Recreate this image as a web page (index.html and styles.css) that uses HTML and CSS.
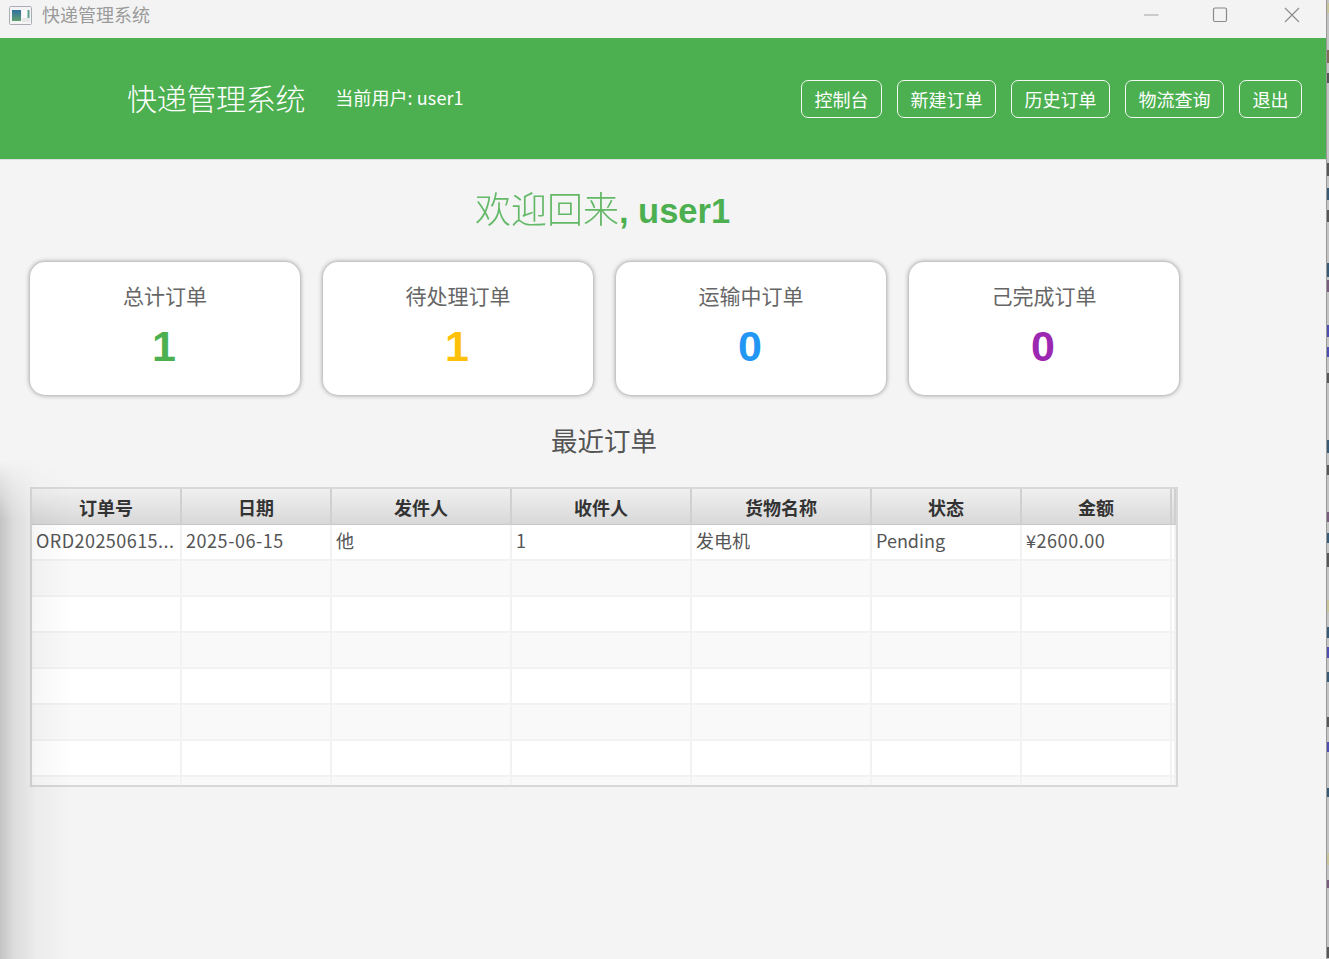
FILE: index.html
```html
<!DOCTYPE html>
<html lang="zh-CN">
<head>
<meta charset="utf-8">
<title>快递管理系统</title>
<link rel="stylesheet" href="styles.css">
</head>
<body>
<div class="desktop">
  <div class="window">
    <div class="titlebar">
      <svg class="app-icon" width="23" height="19" viewBox="0 0 23 19">
        <defs>
          <linearGradient id="panel" x1="0" y1="0" x2="0" y2="1"><stop offset="0" stop-color="#2f6f9f"/><stop offset="1" stop-color="#5f9f6f"/></linearGradient>
        </defs>
        <rect x="0.5" y="0.5" width="22" height="18" rx="1" fill="#f4f4f4" stroke="#a9adb3"/>
        <rect x="3" y="4" width="9" height="11" fill="url(#panel)"/>
        <rect x="13" y="4" width="6" height="8" fill="#fbfbfb"/>
        <rect x="18.5" y="4" width="2" height="8" fill="#5f9f90"/>
        <rect x="13" y="12" width="8" height="4" fill="#e8e8e8"/>
      </svg>
      <span class="window-title">快递管理系统</span>
      <div class="window-controls">
        <svg width="16" height="16" viewBox="0 0 16 16"><path d="M1 8H15.5" stroke="#a0a0a0" stroke-width="1" fill="none"/></svg>
        <svg width="16" height="16" viewBox="0 0 16 16"><rect x="1.5" y="1" width="13" height="13.5" rx="1.5" stroke="#8a8a8a" stroke-width="1.2" fill="none"/></svg>
        <svg class="ctl-close" width="16" height="16" viewBox="0 0 16 16"><path d="M1 1L15 15M15 1L1 15" stroke="#8a8a8a" stroke-width="1.1" fill="none"/></svg>
      </div>
    </div>
    <header class="appbar">
      <h1 class="brand">快递管理系统</h1>
      <span class="user">当前用户: user1</span>
      <nav class="nav">
        <a class="nav-btn">控制台</a>
        <a class="nav-btn">新建订单</a>
        <a class="nav-btn">历史订单</a>
        <a class="nav-btn">物流查询</a>
        <a class="nav-btn">退出</a>
      </nav>
    </header>
    <main class="content">
      <h2 class="welcome"><span class="welcome-cn">欢迎回来</span><b>, user1</b></h2>
      <section class="stats">
        <div class="card"><div class="card-label">总计订单</div><div class="card-value green">1</div></div>
        <div class="card"><div class="card-label">待处理订单</div><div class="card-value amber">1</div></div>
        <div class="card"><div class="card-label">运输中订单</div><div class="card-value blue">0</div></div>
        <div class="card"><div class="card-label">己完成订单</div><div class="card-value purple">0</div></div>
      </section>
      <h3 class="recent">最近订单</h3>
      <div class="table-wrap">
        <table class="orders">
          <colgroup><col class="c150"><col class="c150"><col class="c180"><col class="c180"><col class="c180"><col class="c150"><col class="c150"><col></colgroup>
          <thead><tr><th>订单号</th><th>日期</th><th>发件人</th><th>收件人</th><th>货物名称</th><th>状态</th><th>金额</th><th></th></tr></thead>
          <tbody>
            <tr><td class="code">ORD20250615...</td><td class="num">2025-06-15</td><td>他</td><td>1</td><td>发电机</td><td>Pending</td><td class="num">¥2600.00</td><td></td></tr>
            <tr><td></td><td></td><td></td><td></td><td></td><td></td><td></td><td></td></tr>
            <tr><td></td><td></td><td></td><td></td><td></td><td></td><td></td><td></td></tr>
            <tr><td></td><td></td><td></td><td></td><td></td><td></td><td></td><td></td></tr>
            <tr><td></td><td></td><td></td><td></td><td></td><td></td><td></td><td></td></tr>
            <tr><td></td><td></td><td></td><td></td><td></td><td></td><td></td><td></td></tr>
            <tr><td></td><td></td><td></td><td></td><td></td><td></td><td></td><td></td></tr>
            <tr><td></td><td></td><td></td><td></td><td></td><td></td><td></td><td></td></tr>
          </tbody>
        </table>
      </div>
    </main>
    <div class="left-shadow"></div>
  </div>
  <svg class="behind" width="2" height="959" viewBox="0 0 2 959">
    <g fill="#333" fill-opacity=".75">
      <rect y="50" width="2" height="13" fill="#6a5030"/><rect y="73" width="2" height="10"/><rect y="163" width="2" height="13"/><rect y="210" width="2" height="12"/>
      <rect y="373" width="2" height="10"/><rect y="465" width="2" height="10"/><rect y="553" width="2" height="14"/>
      <rect y="717" width="2" height="10"/><rect y="947" width="2" height="11"/>
    </g>
    <g fill="#c9c49a"><rect y="3" width="2" height="10"/><rect y="600" width="2" height="12"/><rect y="853" width="2" height="12"/></g>
    <g fill="#6a4a70" fill-opacity=".85"><rect y="280" width="2" height="12"/><rect y="512" width="2" height="10"/><rect y="880" width="2" height="8"/></g>
    <g fill="#3a3ab0" fill-opacity=".85"><rect y="325" width="2" height="12"/><rect y="347" width="2" height="10"/><rect y="647" width="2" height="11"/><rect y="742" width="2" height="10"/></g>
    <g fill="#28506f" fill-opacity=".9"><rect y="188" width="2" height="12"/><rect y="263" width="2" height="14"/><rect y="440" width="2" height="13"/><rect y="533" width="2" height="10"/><rect y="627" width="2" height="11"/><rect y="672" width="2" height="10"/><rect y="788" width="2" height="9"/></g>
  </svg>
</div>
</body>
</html>
```
FILE: styles.css
```css
* { box-sizing: border-box; }
html, body { margin: 0; padding: 0; }
body {
  width: 1329px;
  height: 959px;
  overflow: hidden;
  font-family: "Noto Sans CJK SC", "Noto Sans", sans-serif;
  background: #fff;
}
.desktop { display: flex; width: 1329px; height: 959px; }
.window {
  position: relative;
  display: flex;
  flex-direction: column;
  width: 1327px;
  height: 959px;
  background: #f4f4f4;
  border-right: 1px solid #999;
  overflow: hidden;
}
.behind { flex: none; display: block; background: #c4c4c4; }
.titlebar {
  display: flex;
  align-items: center;
  height: 38px;
  flex: none;
  padding: 0 26px 8px 9px;
  background: #f3f3f3;
}
.app-icon { flex: none; }
.window-title {
  margin-left: 10px;
  margin-bottom: 2px;
  font-size: 18px;
  line-height: 30px;
  color: #9a9a9a;
}
.window-controls { margin-left: auto; display: flex; gap: 53px; }
.window-controls svg { display: block; }
.ctl-close { margin-left: 3px; }
.appbar {
  display: flex;
  align-items: center;
  flex: none;
  height: 122px;
  padding: 0 24px 0 127px;
  background: #4caf50;
  border-bottom: 1px solid #dedede;
  color: #fff;
}
.brand {
  margin: -3px 0 0;
  font-family: "Noto Sans CJK SC", sans-serif;
  font-weight: 300;
  font-size: 30px;
  letter-spacing: -0.3px;
  line-height: 40px;
  color: #fff;
}
.user { margin-left: 30px; margin-top: -3px; font-size: 18px; line-height: 24px; letter-spacing: 0.1px; }
.nav { margin-left: auto; display: flex; gap: 15px; }
.nav-btn {
  display: block;
  height: 38px;
  padding: 0 12.5px;
  border: 1px solid #f2f8f2;
  border-radius: 7px;
  font-size: 18px;
  line-height: 36px;
  color: #fff;
}
.content { display: block; padding: 0 0 0 30px; }
.welcome {
  margin: 23px 0 0;
  width: 1145px;
  height: 48px;
  text-align: center;
  font-size: 36px;
  line-height: 48px;
  font-weight: 300;
  color: #4caf50;
  white-space: nowrap;
}
.welcome-cn { opacity: .85; }
.welcome b { font-family: "Liberation Sans", sans-serif; font-weight: 700; font-size: 34.5px; }
.stats { display: flex; gap: 23px; margin-top: 31px; }
.card {
  width: 270px;
  height: 133px;
  padding-top: 19px;
  background: #fff;
  border-radius: 15px;
  box-shadow: 0 0 5px rgba(0, 0, 0, .45);
  text-align: center;
}
.card-label { font-size: 21px; line-height: 28px; color: #666; }
.card-value {
  margin-top: 14px;
  padding-right: 2px;
  font-family: "Liberation Sans", sans-serif;
  font-weight: 700;
  font-size: 43px;
  line-height: 46px;
}
.green { color: #4caf50; }
.amber { color: #ffc107; }
.blue { color: #2196f3; }
.purple { color: #9c27b0; }
.recent {
  margin: 25px 0 0;
  width: 1148px;
  height: 40px;
  text-align: center;
  font-weight: 400;
  font-size: 26.5px;
  line-height: 40px;
  color: #555;
}
.table-wrap {
  width: 1148px;
  height: 300px;
  margin-top: 27px;
  border: 2px solid #d8d8d8;
  background: #fff;
  overflow: hidden;
}
.orders {
  width: 1144px;
  table-layout: fixed;
  border-collapse: separate;
  border-spacing: 0;
  font-size: 18px;
}
.c150 { width: 150px; }
.c180 { width: 180px; }
.orders th {
  height: 36px;
  padding: 0;
  font-size: 18px;
  font-weight: 700;
  color: #333;
  background: linear-gradient(#f0f0f0, #d8d8d8);
  border-right: 2px solid #d0d0d0;
  border-bottom: 1px solid #c8c8c8;
}
.orders td {
  height: 36px;
  padding: 0 0 0 4px;
  color: #555;
  white-space: nowrap;
  overflow: hidden;
  line-height: 30px;
  vertical-align: top;
  border-right: 2px solid #f2f2f2;
  border-bottom: 2px solid #f2f2f2;
  background: #fff;
}
.orders td.num { letter-spacing: 0.55px; }
.orders td.code { letter-spacing: 0.45px; }
.orders tbody tr:nth-child(even) td { background: #f9f9f9; }
.left-shadow {
  position: absolute;
  left: 0;
  top: 460px;
  bottom: 0;
  width: 72px;
  pointer-events: none;
  background: linear-gradient(90deg, rgba(0,0,0,.2), rgba(0,0,0,.1) 18%, rgba(0,0,0,.03) 50%, rgba(0,0,0,0));
  -webkit-mask-image: linear-gradient(180deg, transparent, #000 60px);
  mask-image: linear-gradient(180deg, transparent, #000 60px);
}
```
